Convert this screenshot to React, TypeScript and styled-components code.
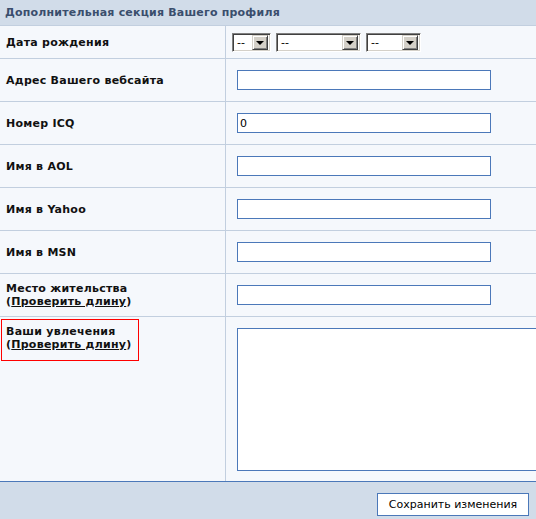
import React from 'react'
import styled, { createGlobalStyle } from 'styled-components'

const GlobalStyle = createGlobalStyle`
  html, body {
    margin: 0;
    padding: 0;
    background: #f5f8fc;
  }
  body {
    font-family: "DejaVu Sans", Verdana, sans-serif;
    font-size: 11px;
    color: #000;
    overflow: hidden;
  }
`

const Panel = styled.div`
  width: 536px;
  height: 519px;
  overflow: hidden;
  background: #f5f8fc;
  display: flex;
  flex-direction: column;
`

const Header = styled.div`
  height: 26px;
  box-sizing: border-box;
  padding: 0 5px;
  display: flex;
  align-items: center;
  background: #d1dce9;
  border-bottom: 1px solid #c2cfdf;
  color: #3a4e6d;
  font-weight: bold;
  font-size: 11px;
  letter-spacing: 0.2px;
`

const Row = styled.div<{ $height: number; $top?: boolean }>`
  display: grid;
  grid-template-columns: 226px 1fr;
  height: ${p => p.$height}px;
  box-sizing: border-box;
  border-bottom: 1px solid ${p => (p.$top ? '#4b78b9' : '#c2cfdf')};
`

const Label = styled.div<{ $top?: boolean }>`
  border-right: 1px solid #c2cfdf;
  display: flex;
  align-items: ${p => (p.$top ? 'flex-start' : 'center')};
  padding-left: ${p => (p.$top ? '0' : '6px')};
  font-weight: bold;
  line-height: 13px;
  letter-spacing: 0.25px;
  color: #111;
`

const Highlight = styled.div`
  margin: 2px 0 0 1px;
  padding: 5px 6px 9px 4px;
  border: 1px solid #ff0000;
`

const CheckLink = styled.a`
  color: #111;
  text-decoration: underline;
  cursor: pointer;
`

const Field = styled.div<{ $top?: boolean }>`
  display: flex;
  align-items: ${p => (p.$top ? 'flex-start' : 'center')};
  padding: ${p => (p.$top ? '11px 0 0 11px' : '0 0 0 11px')};
  gap: 5px;
  overflow: hidden;
`

const DateField = styled(Field)`
  padding-left: 6px;
  padding-top: 1px;
`

const TextInput = styled.input`
  width: 254px;
  height: 20px;
  box-sizing: border-box;
  border: 1px solid #4b78b9;
  background: #fff;
  padding: 0 2px;
  font-family: "DejaVu Sans", Verdana, sans-serif;
  font-size: 11px;
  color: #000;
  outline: none;
`

const TextArea = styled.textarea`
  width: 420px;
  min-width: 420px;
  height: 143px;
  box-sizing: border-box;
  border: 1px solid #4b78b9;
  background: #fff;
  resize: none;
  outline: none;
`

const SelectBox = styled.div<{ $width: number }>`
  width: ${p => p.$width}px;
  height: 19px;
  box-sizing: border-box;
  display: flex;
  align-items: center;
  justify-content: space-between;
  background: #fff;
  border-top: 1px solid #808080;
  border-left: 1px solid #808080;
  border-bottom: 1px solid #fff;
  border-right: 1px solid #fff;
  box-shadow: inset 1px 1px 0 #404040, inset -1px -1px 0 #d4d0c8;
  padding: 2px 2px 2px 4px;
  font-size: 11px;
  line-height: 13px;
`

const ArrowButton = styled.span`
  width: 16px;
  height: 15px;
  box-sizing: border-box;
  display: flex;
  align-items: center;
  justify-content: center;
  background: #d4d0c8;
  border-top: 1px solid #d4d0c8;
  border-left: 1px solid #d4d0c8;
  border-bottom: 1px solid #404040;
  border-right: 1px solid #404040;
  box-shadow: inset 1px 1px 0 #fff, inset -1px -1px 0 #808080;

  &::after {
    content: '';
    width: 0;
    height: 0;
    border-left: 4px solid transparent;
    border-right: 4px solid transparent;
    border-top: 4px solid #000;
    margin-top: 1px;
  }
`

const Footer = styled.div`
  flex: 1;
  background: #d1dce9;
  display: flex;
  justify-content: flex-end;
  align-items: flex-start;
  padding: 11px 7px 0 0;
`

const SaveButton = styled.button`
  width: 152px;
  height: 23px;
  box-sizing: border-box;
  background: #fff;
  border: 1px solid #4b78b9;
  font-family: "DejaVu Sans", Verdana, sans-serif;
  font-size: 11px;
  color: #000;
  padding: 0;
  cursor: pointer;
`

const Select = ({ width }: { width: number }) => (
  <SelectBox $width={width}>
    <span>--</span>
    <ArrowButton />
  </SelectBox>
)

const inputRows = [
  { label: 'Адрес Вашего вебсайта', value: '' },
  { label: 'Номер ICQ', value: '0' },
  { label: 'Имя в AOL', value: '' },
  { label: 'Имя в Yahoo', value: '' },
  { label: 'Имя в MSN', value: '' },
]

export default function App() {
  return (
    <>
      <GlobalStyle />
      <Panel>
        <Header>Дополнительная секция Вашего профиля</Header>
        <Row $height={33}>
          <Label>Дата рождения</Label>
          <DateField>
            <Select width={39} />
            <Select width={85} />
            <Select width={55} />
          </DateField>
        </Row>
        {inputRows.map(r => (
          <Row key={r.label} $height={43}>
            <Label>{r.label}</Label>
            <Field>
              <TextInput defaultValue={r.value} />
            </Field>
          </Row>
        ))}
        <Row $height={43}>
          <Label>
            <div>
              Место жительства
              <br />(<CheckLink>Проверить длину</CheckLink>)
            </div>
          </Label>
          <Field>
            <TextInput />
          </Field>
        </Row>
        <Row $height={165} $top>
          <Label $top>
            <Highlight>
              Ваши увлечения
              <br />(<CheckLink>Проверить длину</CheckLink>)
            </Highlight>
          </Label>
          <Field $top>
            <TextArea />
          </Field>
        </Row>
        <Footer>
          <SaveButton>Сохранить изменения</SaveButton>
        </Footer>
      </Panel>
    </>
  )
}
